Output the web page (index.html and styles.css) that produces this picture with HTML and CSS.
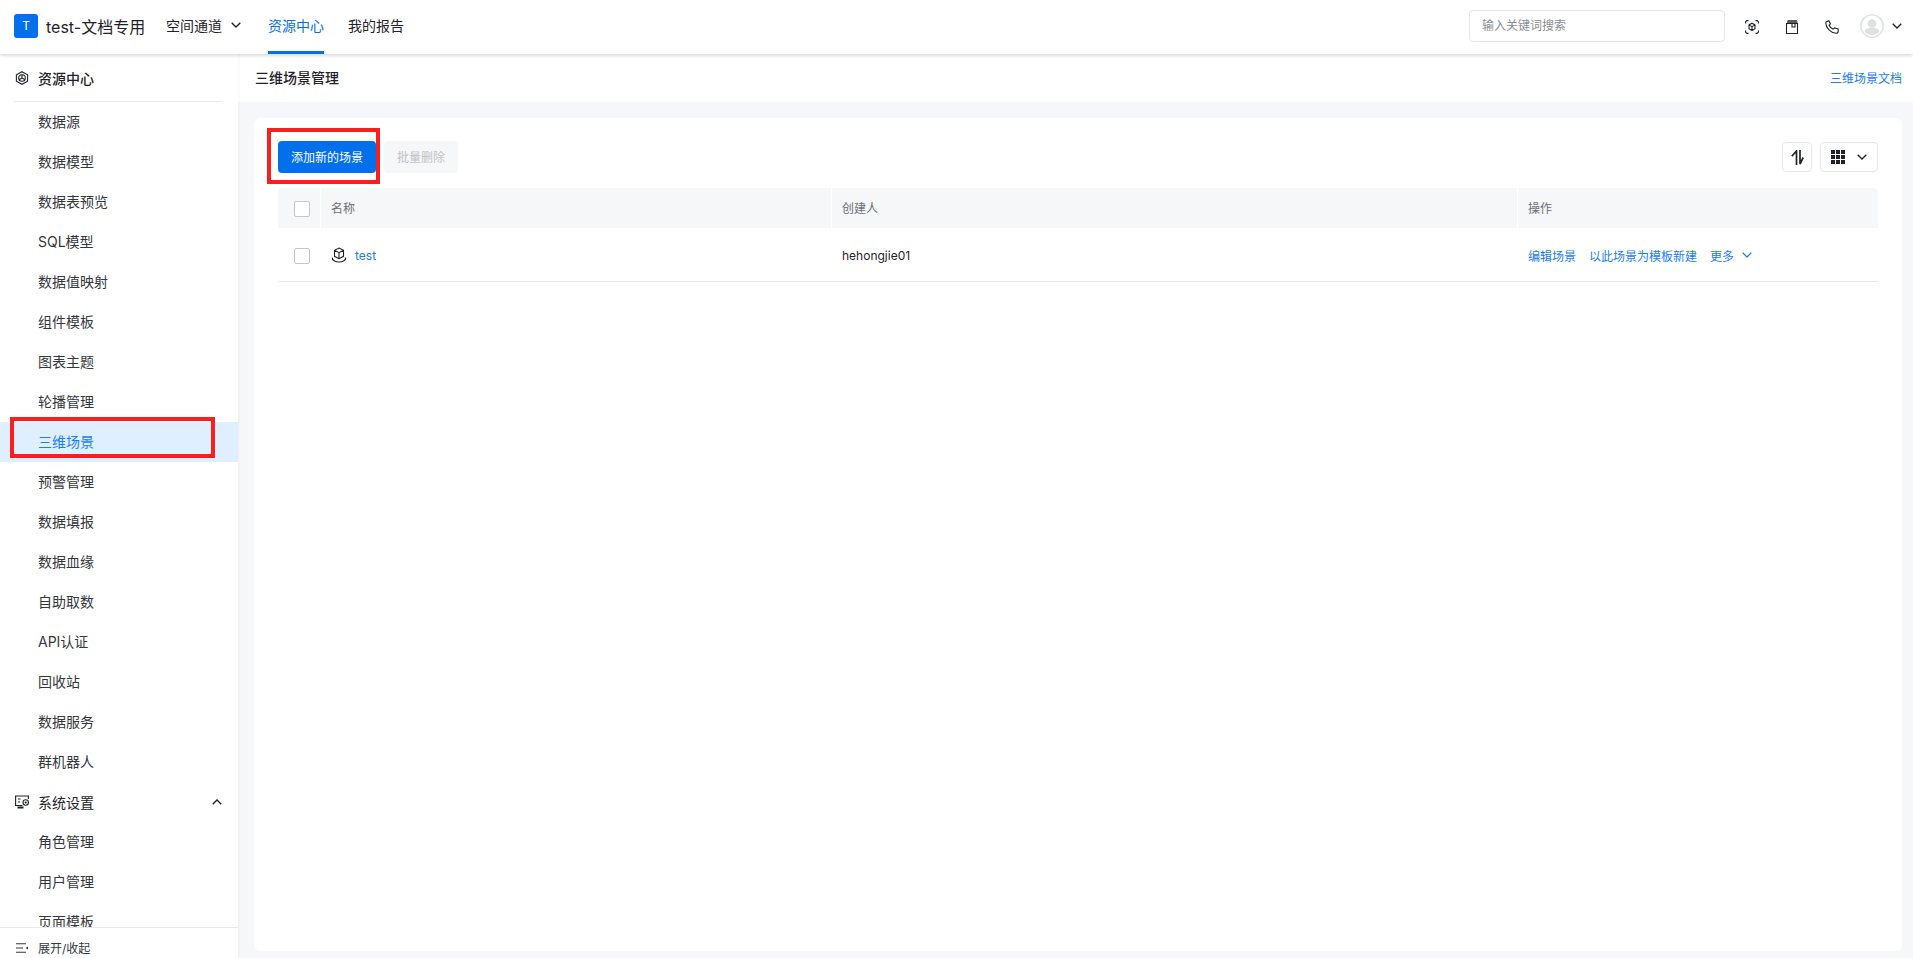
FILE: index.html
```html
<!DOCTYPE html>
<html lang="zh-CN">
  <head>
    <meta charset="utf-8">
    <title>三维场景管理</title>
    <link rel="stylesheet" href="styles.css">
  </head>
  <body>
    <header class="topbar">
      <div class="brand">
        <span class="brand-logo">T</span>
        <span class="brand-name">test-文档专用</span>
      </div>
      <nav class="topnav">
        <a class="topnav-item topnav-space">空间通道
          <svg class="chev" viewBox="0 0 10 6"><path d="M.7.7L5 5l4.300-4.300"/></svg>
        </a>
        <a class="topnav-item active">资源中心</a>
        <a class="topnav-item">我的报告</a>
      </nav>
      <div class="topbar-right">
        <div class="search">输入关键词搜索</div>
        <svg class="top-icon" viewBox="0 0 14 14">
          <path d="M7 3.200l3 1.700v3.800L7 10.500 4 8.700V4.900zM4 4.900l3 1.800 3-1.800M7 6.700v3.800"/>
          <path d="M.6 3.500V1.800L1.800.6h1.700M10.500.6h1.700l1.200 1.200v1.700M13.400 10.500v1.700l-1.200 1.200h-1.700M3.500 13.400H1.800L.6 12.200v-1.700"/>
        </svg>
        <svg class="top-icon" viewBox="0 0 14 14">
          <path d="M1.500 3.500h11v10h-11zM2.500 .7h9.500M2 2.100h10.500M7 3.500v3.500h3V3.500"/>
        </svg>
        <svg class="top-icon" viewBox="0 0 14 14">
          <path d="M1.300 1.800L3.800.8l1.700 3.200-1.300 1.200c.7 1.800 2.200 3.300 4 4l1.200-1.300 3.800 1v2.300c0 1-.8 2-2 2C5.500 13 1 8 .8 3c0-.5.100-1 .5-1.200z"/>
        </svg>
        <svg class="avatar" viewBox="0 0 24 24">
          <circle class="avatar-ring" cx="12" cy="12" r="11.200"/>
          <circle class="avatar-fill" cx="12" cy="9.500" r="4.300"/>
          <path class="avatar-fill" d="M4.500 17.500c1-3 4-4 7.500-4s6.500 1 7.500 4A9.700 9.700 0 0 1 12 21a9.700 9.700 0 0 1-7.500-3.500z"/>
        </svg>
        <svg class="chev" viewBox="0 0 10 6"><path d="M.7.7L5 5l4.300-4.300"/></svg>
      </div>
    </header>

    <div class="layout">
      <aside class="sidebar">
        <div class="side-scroll">
          <div class="side-group side-group-first">
            <svg class="side-icon" viewBox="0 0 14 14">
              <path d="M7 .7l5.600 3.100v6.400L7 13.300 1.400 10.200V3.800z"/>
              <circle cx="7" cy="7" r="3.300"/>
              <path d="M7 3.700V7l2.900 1.700M7 7L4.100 8.700"/>
            </svg>
            资源中心
          </div>
          <a class="side-item">数据源</a>
          <a class="side-item">数据模型</a>
          <a class="side-item">数据表预览</a>
          <a class="side-item">SQL模型</a>
          <a class="side-item">数据值映射</a>
          <a class="side-item">组件模板</a>
          <a class="side-item">图表主题</a>
          <a class="side-item">轮播管理</a>
          <a class="side-item selected">三维场景</a>
          <a class="side-item">预警管理</a>
          <a class="side-item">数据填报</a>
          <a class="side-item">数据血缘</a>
          <a class="side-item">自助取数</a>
          <a class="side-item">API认证</a>
          <a class="side-item">回收站</a>
          <a class="side-item">数据服务</a>
          <a class="side-item">群机器人</a>
          <div class="side-group">
            <svg class="side-icon" viewBox="0 0 14 14">
              <path d="M7.500 10.500H.6V1h12.800v3M3 4h2.500M3 7h2"/>
              <path class="fill" d="M2.500 11.500h6v2h-6z"/>
              <circle cx="10.700" cy="7.500" r="2.700"/>
              <circle class="fill" cx="10.700" cy="7.500" r="1.100"/>
            </svg>
            系统设置
            <svg class="chev chev-up" viewBox="0 0 10 6"><path d="M.7 5.300L5 1l4.300 4.300"/></svg>
          </div>
          <a class="side-item">角色管理</a>
          <a class="side-item">用户管理</a>
          <a class="side-item">页面模板</a>
        </div>
        <div class="side-foot">
          <svg class="foot-icon" viewBox="0 0 12 10"><path d="M0 .7h10M0 5h7M0 9.300h10"/><path class="fill" d="M12 3.500v3L9.500 5z"/></svg>
          展开/收起
        </div>
      </aside>

      <main class="main">
        <div class="page-head">
          <h1 class="page-title">三维场景管理</h1>
          <a class="doc-link">三维场景文档</a>
        </div>
        <section class="card">
          <div class="toolbar">
            <button class="btn btn-primary">添加新的场景</button>
            <button class="btn btn-disabled">批量删除</button>
            <div class="toolbar-right">
              <button class="tool-btn tool-sort">
                <svg viewBox="0 0 13 15"><path d="M5.500 15V1L.8 6.200M9 0v14l3.200-6.500"/></svg>
              </button>
              <button class="tool-btn tool-view">
                <svg class="grid-icon" viewBox="0 0 14 14">
                  <path d="M0 0h4v4H0zM5 0h4v4H5zM10 0h4v4h-4zM0 5h4v4H0zM5 5h4v4H5zM10 5h4v4h-4zM0 10h4v4H0zM5 10h4v4H5zM10 10h4v4h-4z"/>
                </svg>
                <svg class="chev" viewBox="0 0 10 6"><path d="M.7.7L5 5l4.300-4.300"/></svg>
              </button>
            </div>
          </div>

          <div class="table">
            <div class="row row-head">
              <div class="cell cell-check"><span class="checkbox"></span></div>
              <div class="cell">名称</div>
              <div class="cell">创建人</div>
              <div class="cell">操作</div>
            </div>
            <div class="row row-body">
              <div class="cell cell-check"><span class="checkbox"></span></div>
              <div class="cell">
                <svg class="scene-icon" viewBox="0 0 16 16">
                  <path d="M8 1l4.500 2.300v6L8 11.700 3.500 9.300v-6zM3.500 3.300L8 5.700l4.500-2.400M8 5.700v6"/>
                  <path d="M1.300 10.500c-.5 2.500 3 4.500 6.700 4.500s7.200-2 6.700-4.500"/>
                </svg>
                <a class="link">test</a>
              </div>
              <div class="cell">hehongjie01</div>
              <div class="cell actions">
                <a class="link">编辑场景</a>
                <a class="link">以此场景为模板新建</a>
                <a class="link more">更多
                  <svg class="chev" viewBox="0 0 10 6"><path d="M.7.7L5 5l4.300-4.300"/></svg>
                </a>
              </div>
            </div>
          </div>
        </section>
      </main>
    </div>

    <!-- annotation boxes drawn on top of the screenshot -->
    <div class="mark mark-add"></div>
    <div class="mark mark-menu"></div>
  </body>
</html>
```
FILE: styles.css
```css
* {
  box-sizing: border-box;
}

html,
body {
  height: 100%;
}

body {
  margin: 0;
  overflow: hidden;
  position: relative;
  color: #1f2329;
  background: #f6f7f9;
  font-family: Inter, "Noto Sans CJK SC", sans-serif;
  font-size: 14px;
  display: flex;
  flex-direction: column;
}

svg {
  display: block;
  fill: none;
  stroke: currentColor;
  stroke-width: 1.1;
}

svg .fill {
  fill: currentColor;
  stroke: none;
}

a {
  color: inherit;
  text-decoration: none;
}

.chev {
  width: 10px;
  height: 6px;
  stroke-width: 1.3;
  flex: none;
}

/* top bar */
.topbar {
  height: 54px;
  flex: none;
  display: flex;
  align-items: stretch;
  padding: 0 11px 0 14px;
  background: #fff;
  box-shadow: 0 1px 4px rgba(0, 0, 0, 0.2);
  position: relative;
  z-index: 2;
}

.brand {
  display: flex;
  align-items: center;
  gap: 8px;
  width: 152px;
  padding-bottom: 2px;
}

.brand-logo {
  width: 24px;
  height: 24px;
  border-radius: 3px;
  background: #0370eb;
  color: #fff;
  font-size: 12px;
  line-height: 24px;
  text-align: center;
}

.brand-name {
  font-size: 16px;
  white-space: nowrap;
}

.topnav {
  display: flex;
  gap: 24px;
}

.topnav-item {
  display: flex;
  align-items: center;
  gap: 9px;
  padding-bottom: 1px;
  border-bottom: 3px solid transparent;
}

.topnav-item.active {
  color: #0370eb;
  border-bottom-color: #0370eb;
}

.topnav-space {
  margin-right: 3px;
}

.topbar-right {
  margin-left: auto;
  display: flex;
  align-items: center;
  padding-bottom: 2px;
}

.search {
  width: 256px;
  height: 32px;
  border: 1px solid #e4e5e8;
  border-radius: 4px;
  padding: 0 12px;
  font-size: 12px;
  line-height: 30px;
  color: #8a8d93;
  margin-right: 20px;
}

.top-icon {
  width: 14px;
  height: 14px;
  margin: 2px 26px 0 0;
  color: #1f2329;
}

.avatar {
  width: 24px;
  height: 24px;
  margin-left: -5px;
  margin-right: 8px;
  stroke: none;
}

.avatar-ring {
  fill: #fff;
  stroke: #e3e4e6;
  stroke-width: 1.600;
}

.avatar-fill {
  fill: #dfe0e3;
}

/* page body */
.layout {
  flex: 1;
  display: flex;
  min-height: 0;
}

.sidebar {
  width: 238px;
  flex: none;
  display: flex;
  flex-direction: column;
  background: #fff;
  box-shadow: 1px 0 2px rgba(0, 0, 0, 0.04);
  position: relative;
  z-index: 1;
}

.side-scroll {
  flex: 1;
  min-height: 0;
  overflow: hidden;
}

.side-group {
  height: 40px;
  padding: 0 16px 1px 15px;
  display: flex;
  align-items: center;
  gap: 9px;
}

.side-group-first {
  height: 48px;
  margin: 0 16px 0 14px;
  padding: 1px 0 0 1px;
  font-weight: 500;
  border-bottom: 1px solid #e8e9eb;
}

.side-icon {
  width: 14px;
  height: 14px;
  flex: none;
}

.chev-up {
  margin-left: auto;
}

.side-item {
  display: block;
  height: 40px;
  line-height: 40px;
  padding-left: 38px;
  color: #33373d;
}

.side-item.selected {
  background: #e0efff;
  color: #1a7df0;
}

.side-foot {
  height: 31px;
  flex: none;
  display: flex;
  align-items: center;
  gap: 10px;
  padding: 9px 0 0 16px;
  font-size: 12px;
  border-top: 1px solid #e8e9eb;
  color: #33373d;
}

.foot-icon {
  width: 12px;
  height: 10px;
  flex: none;
}

/* main column */
.main {
  flex: 1;
  min-width: 0;
  display: flex;
  flex-direction: column;
}

.page-head {
  height: 48px;
  flex: none;
  display: flex;
  align-items: center;
  justify-content: space-between;
  padding: 0 11px 2px 17px;
  background: #fff;
}

.page-title {
  margin: 0;
  font-size: 14px;
  font-weight: 500;
}

.doc-link {
  font-size: 12px;
  color: #1a7df0;
}

.card {
  flex: 1;
  margin: 16px 11px 7px 16px;
  padding: 23px 24px 0;
  background: #fff;
  border-radius: 6px;
}

.toolbar {
  display: flex;
  align-items: center;
  gap: 8px;
  height: 32px;
  margin-bottom: 15px;
}

.toolbar-right {
  margin-left: auto;
  display: flex;
  gap: 8px;
}

.btn {
  height: 32px;
  padding: 0 13px 1px;
  border: none;
  border-radius: 4px;
  font: inherit;
  font-size: 12px;
}

.btn-primary {
  background: #0370eb;
  color: #fff;
}

.btn-disabled {
  background: #f6f7f9;
  color: #c0c2c6;
}

.tool-btn {
  height: 30px;
  padding: 0;
  border: 1px solid #e6e7ea;
  border-radius: 4px;
  background: #fff;
  color: #1f2329;
  display: flex;
  align-items: center;
  justify-content: center;
}

.tool-sort {
  width: 30px;
}

.tool-sort svg {
  width: 13px;
  height: 15px;
  stroke-width: 1.700;
}

.tool-view {
  width: 58px;
  gap: 12px;
}

.grid-icon {
  width: 14px;
  height: 14px;
  fill: currentColor;
  stroke: none;
}

/* table */
.row {
  display: grid;
  grid-template-columns: 42px 511px 686px 361px;
  font-size: 12px;
}

.row-head {
  height: 40px;
  background: #f6f7f9;
  color: #6b6e75;
  border-radius: 4px 4px 0 0;
}

.row-head .cell {
  padding-bottom: 1px;
}

.row-head .cell + .cell {
  border-left: 1px solid #fff;
}

.row-head .checkbox {
  margin-top: 3px;
}

.row-body {
  height: 54px;
  border-bottom: 1px solid #e8e9eb;
}

.row-body .cell {
  padding-top: 1px;
}

.row-body .cell + .cell {
  border-left: 1px solid transparent;
}

.row-body .checkbox {
  margin-top: 2px;
}

.cell {
  display: flex;
  align-items: center;
  padding-left: 10px;
}

.cell-check {
  padding-left: 16px;
}

.checkbox {
  width: 16px;
  height: 16px;
  border: 1px solid #c4c6ca;
  border-radius: 2px;
  background: #fff;
}

.scene-icon {
  width: 16px;
  height: 16px;
  margin-right: 8px;
}

.link {
  color: #1a7df0;
}

.actions {
  gap: 13px;
}

.more {
  display: flex;
  align-items: center;
  gap: 8px;
}

/* red annotation boxes */
.mark {
  position: absolute;
  border: 4px solid #fc1e1e;
  z-index: 3;
}

.mark-add {
  left: 267px;
  top: 128px;
  width: 113px;
  height: 56px;
}

.mark-menu {
  left: 10px;
  top: 417px;
  width: 205px;
  height: 41px;
}
```
